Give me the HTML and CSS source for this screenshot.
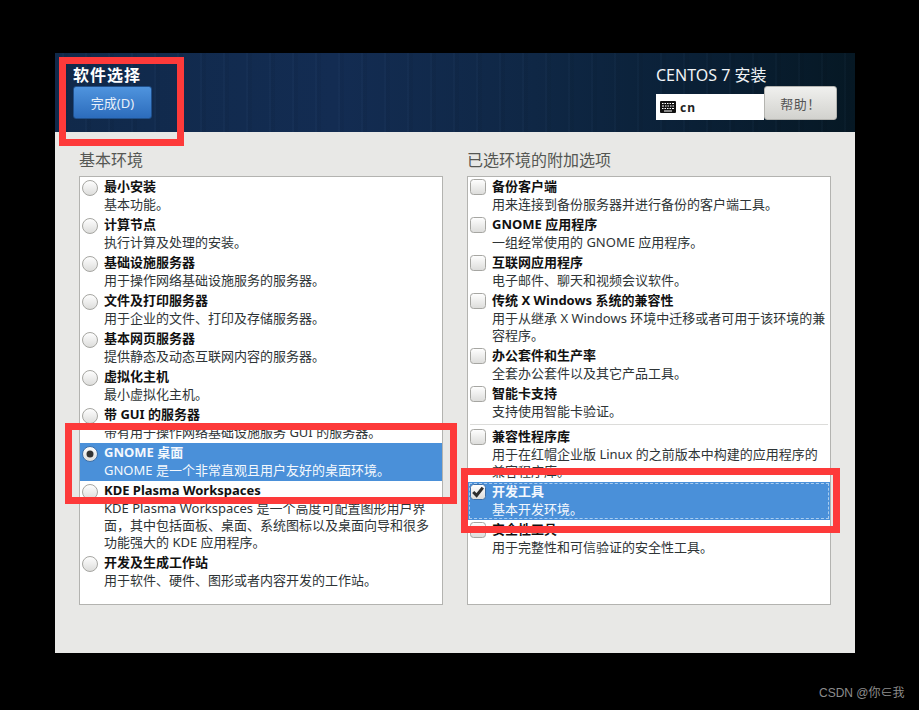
FILE: index.html
```html
<!DOCTYPE html>
<html lang="zh-CN">
<head>
<meta charset="utf-8">
<title>软件选择</title>
<link rel="stylesheet" href="styles.css">
</head>
<body>
<svg class="defs" width="0" height="0" aria-hidden="true">
  <defs>
    <linearGradient id="ctl" x1="0" y1="0" x2="0" y2="1">
      <stop offset="0" stop-color="#ffffff"/>
      <stop offset="1" stop-color="#dcdcda"/>
    </linearGradient>
  </defs>
</svg>
<main class="window">
  <header class="topbar">
    <div class="topbar-left">
      <h1 class="spoke-title">软件选择</h1>
      <button class="done-btn">完成(D)</button>
    </div>
    <div class="topbar-right">
      <div class="product">CENTOS 7 安装</div>
      <div class="tools">
        <div class="layout-box">
          <svg class="kbd" width="16" height="12" viewBox="0 0 16 12">
            <rect width="16" height="12" rx="1" fill="#111"/>
            <path d="M2 2.5h1.5M4.5 2.5H6M7 2.5h1.5M9.5 2.5H11M12 2.5h2M2 5h2M5 5h1.5M7.5 5H9M10 5h1.5M12.5 5H14M2 7.5h1.5M4.5 7.5H6M7 7.5h1.5M9.5 7.5H11M12 7.5h2M4 10h8" stroke="#fff" stroke-width="1.2" fill="none"/>
          </svg>
          <span class="layout-name">cn</span>
        </div>
        <button class="help-btn">帮助！</button>
      </div>
    </div>
  </header>
  <div class="content">
    <section class="column">
      <h2 class="col-label">基本环境</h2>
      <div class="list">
        <div class="row"><svg class="ind" viewBox="0 0 16 16"><circle cx="8" cy="8" r="7.5" fill="url(#ctl)" stroke="#a6a6a2"/></svg><div class="txt"><div class="name">最小安装</div><div class="desc">基本功能。</div></div></div>
        <div class="row"><svg class="ind" viewBox="0 0 16 16"><circle cx="8" cy="8" r="7.5" fill="url(#ctl)" stroke="#a6a6a2"/></svg><div class="txt"><div class="name">计算节点</div><div class="desc">执行计算及处理的安装。</div></div></div>
        <div class="row"><svg class="ind" viewBox="0 0 16 16"><circle cx="8" cy="8" r="7.5" fill="url(#ctl)" stroke="#a6a6a2"/></svg><div class="txt"><div class="name">基础设施服务器</div><div class="desc">用于操作网络基础设施服务的服务器。</div></div></div>
        <div class="row"><svg class="ind" viewBox="0 0 16 16"><circle cx="8" cy="8" r="7.5" fill="url(#ctl)" stroke="#a6a6a2"/></svg><div class="txt"><div class="name">文件及打印服务器</div><div class="desc">用于企业的文件、打印及存储服务器。</div></div></div>
        <div class="row"><svg class="ind" viewBox="0 0 16 16"><circle cx="8" cy="8" r="7.5" fill="url(#ctl)" stroke="#a6a6a2"/></svg><div class="txt"><div class="name">基本网页服务器</div><div class="desc">提供静态及动态互联网内容的服务器。</div></div></div>
        <div class="row"><svg class="ind" viewBox="0 0 16 16"><circle cx="8" cy="8" r="7.5" fill="url(#ctl)" stroke="#a6a6a2"/></svg><div class="txt"><div class="name">虚拟化主机</div><div class="desc">最小虚拟化主机。</div></div></div>
        <div class="row"><svg class="ind" viewBox="0 0 16 16"><circle cx="8" cy="8" r="7.5" fill="url(#ctl)" stroke="#a6a6a2"/></svg><div class="txt"><div class="name">带 GUI 的服务器</div><div class="desc">带有用于操作网络基础设施服务 GUI 的服务器。</div></div></div>
        <div class="row selected"><svg class="ind" viewBox="0 0 16 16"><circle cx="8" cy="8" r="7.5" fill="url(#ctl)" stroke="#3a6ea8"/><circle cx="8" cy="8" r="3.5" fill="#333"/></svg><div class="txt"><div class="name">GNOME 桌面</div><div class="desc">GNOME 是一个非常直观且用户友好的桌面环境。</div></div></div>
        <div class="row"><svg class="ind" viewBox="0 0 16 16"><circle cx="8" cy="8" r="7.5" fill="url(#ctl)" stroke="#a6a6a2"/></svg><div class="txt"><div class="name">KDE Plasma Workspaces</div><div class="desc">KDE Plasma Workspaces 是一个高度可配置图形用户界<br>面，其中包括面板、桌面、系统图标以及桌面向导和很多<br>功能强大的 KDE 应用程序。</div></div></div>
        <div class="row"><svg class="ind" viewBox="0 0 16 16"><circle cx="8" cy="8" r="7.5" fill="url(#ctl)" stroke="#a6a6a2"/></svg><div class="txt"><div class="name">开发及生成工作站</div><div class="desc">用于软件、硬件、图形或者内容开发的工作站。</div></div></div>
      </div>
    </section>
    <section class="column">
      <h2 class="col-label">已选环境的附加选项</h2>
      <div class="list checks">
        <div class="row"><svg class="ind" viewBox="0 0 16 16"><rect x=".5" y=".5" width="15" height="15" rx="3" fill="url(#ctl)" stroke="#a6a6a2"/></svg><div class="txt"><div class="name">备份客户端</div><div class="desc">用来连接到备份服务器并进行备份的客户端工具。</div></div></div>
        <div class="row"><svg class="ind" viewBox="0 0 16 16"><rect x=".5" y=".5" width="15" height="15" rx="3" fill="url(#ctl)" stroke="#a6a6a2"/></svg><div class="txt"><div class="name">GNOME 应用程序</div><div class="desc">一组经常使用的 GNOME 应用程序。</div></div></div>
        <div class="row"><svg class="ind" viewBox="0 0 16 16"><rect x=".5" y=".5" width="15" height="15" rx="3" fill="url(#ctl)" stroke="#a6a6a2"/></svg><div class="txt"><div class="name">互联网应用程序</div><div class="desc">电子邮件、聊天和视频会议软件。</div></div></div>
        <div class="row"><svg class="ind" viewBox="0 0 16 16"><rect x=".5" y=".5" width="15" height="15" rx="3" fill="url(#ctl)" stroke="#a6a6a2"/></svg><div class="txt"><div class="name">传统 X Windows 系统的兼容性</div><div class="desc">用于从继承 X Windows 环境中迁移或者可用于该环境的兼<br>容程序。</div></div></div>
        <div class="row"><svg class="ind" viewBox="0 0 16 16"><rect x=".5" y=".5" width="15" height="15" rx="3" fill="url(#ctl)" stroke="#a6a6a2"/></svg><div class="txt"><div class="name">办公套件和生产率</div><div class="desc">全套办公套件以及其它产品工具。</div></div></div>
        <div class="row"><svg class="ind" viewBox="0 0 16 16"><rect x=".5" y=".5" width="15" height="15" rx="3" fill="url(#ctl)" stroke="#a6a6a2"/></svg><div class="txt"><div class="name">智能卡支持</div><div class="desc">支持使用智能卡验证。</div></div></div>
        <div class="sep"></div>
        <div class="row"><svg class="ind" viewBox="0 0 16 16"><rect x=".5" y=".5" width="15" height="15" rx="3" fill="url(#ctl)" stroke="#a6a6a2"/></svg><div class="txt"><div class="name">兼容性程序库</div><div class="desc">用于在红帽企业版 Linux 的之前版本中构建的应用程序的<br>兼容程序库。</div></div></div>
        <div class="row selected focused"><svg class="ind" viewBox="0 0 16 16"><rect x=".5" y=".5" width="15" height="15" rx="3" fill="url(#ctl)" stroke="#3a6ea8"/><path d="M3.2 8 6.6 11.4 12.8 3.6" fill="none" stroke="#2e2e2e" stroke-width="3"/></svg><div class="txt"><div class="name">开发工具</div><div class="desc">基本开发环境。</div></div></div>
        <div class="row"><svg class="ind" viewBox="0 0 16 16"><rect x=".5" y=".5" width="15" height="15" rx="3" fill="url(#ctl)" stroke="#a6a6a2"/></svg><div class="txt"><div class="name">安全性工具</div><div class="desc">用于完整性和可信验证的安全性工具。</div></div></div>
      </div>
    </section>
  </div>
</main>
<div class="mark mark-done"></div>
<div class="mark mark-env"></div>
<div class="mark mark-dev"></div>
<div class="watermark">CSDN @你∈我</div>
</body>
</html>
```
FILE: styles.css
```css
* { box-sizing: border-box; }
html, body { margin: 0; height: 100%; }
body {
  position: relative;
  width: 919px;
  height: 710px;
  overflow: hidden;
  padding-top: 53px;
  background: #000;
  font-family: "Noto Sans", "Noto Sans CJK SC", sans-serif;
  font-size: 13px;
  color: #2e3436;
}
.defs { position: absolute; }
.window {
  width: 800px;
  height: 600px;
  margin-left: 55px;
  background: #e8e8e6;
  display: flex;
  flex-direction: column;
}
.topbar {
  height: 79px;
  display: flex;
  justify-content: space-between;
  padding: 12px 18px 0;
  background:
    repeating-linear-gradient(90deg, rgba(255,255,255,0) 0 7px, rgba(120,160,210,.03) 7px 9px, rgba(0,0,0,.04) 9px 13px, rgba(255,255,255,0) 13px 23px),
    linear-gradient(90deg, #10294a 0%, #132c52 35%, #0f2745 60%, #0a2036 80%, #061824 100%);
}
.spoke-title {
  margin: 0 0 1px;
  font-size: 16px;
  line-height: 20px;
  letter-spacing: 1px;
  font-weight: 700;
  color: #fff;
}
.done-btn {
  display: block;
  width: 79px;
  height: 33px;
  padding: 0;
  border: 1px solid #1f4f8a;
  border-radius: 3px;
  background: linear-gradient(#4f94de, #2c6cbc);
  color: #e8f0fa;
  font: inherit;
}
.topbar-right {
  width: 181px;
  display: flex;
  flex-direction: column;
}
.product {
  height: 21px;
  font-size: 16px;
  line-height: 21px;
  color: #f0f3f6;
}
.tools {
  display: flex;
  align-items: flex-end;
  height: 34px;
}
.layout-box {
  width: 108px;
  height: 26px;
  padding-left: 4px;
  background: #fff;
  display: flex;
  align-items: center;
  gap: 4px;
}
.layout-name { font-size: 12px; font-weight: 700; letter-spacing: 1px; color: #222; }
.help-btn {
  width: 73px;
  height: 34px;
  padding: 0;
  border: 1px solid #b4b4b0;
  border-radius: 3px;
  background: linear-gradient(#f0f0ee, #d2d2ce);
  color: #555;
  font: inherit;
  letter-spacing: .5px;
}
.content {
  display: flex;
  gap: 24px;
  padding: 18px 24px 0;
}
.column { width: 364px; }
.col-label {
  margin: 0 0 6px;
  font-size: 16px;
  line-height: 20px;
  font-weight: 400;
  color: #555753;
}
.list {
  height: 429px;
  border: 1px solid #b3b3b0;
  background: #fff;
  overflow: hidden;
}
.row {
  display: flex;
  gap: 6px;
  padding: 1px 2px 2px;
}
.ind { flex: none; width: 16px; height: 16px; margin-top: 2px; }
.checks .ind { margin-top: 1px; }
.name { font-weight: 700; line-height: 17px; margin-bottom: 1px; color: #111; }
.desc { line-height: 17px; color: #2e3436; }
.selected { background: #4a90d9; }
.selected .name, .selected .desc { color: #f4f8fd; }
.focused { outline: 1px dashed #a9cdf0; outline-offset: -2px; }
.sep { height: 1px; margin: 2px 2px 2px; background: #dcdcda; }
.mark {
  position: absolute;
  border: 7px solid #fd3a3a;
}
.mark-done { left: 59px; top: 57px; width: 125px; height: 89px; }
.mark-env { left: 65px; top: 423px; width: 392px; height: 81px; }
.mark-dev { left: 461px; top: 468px; width: 379px; height: 65px; }
.watermark {
  position: absolute;
  left: 819px;
  top: 685px;
  font-family: "Liberation Sans", "Noto Sans CJK SC", sans-serif;
  font-size: 12px;
  line-height: 17px;
  color: #8c8c8c;
}
```
